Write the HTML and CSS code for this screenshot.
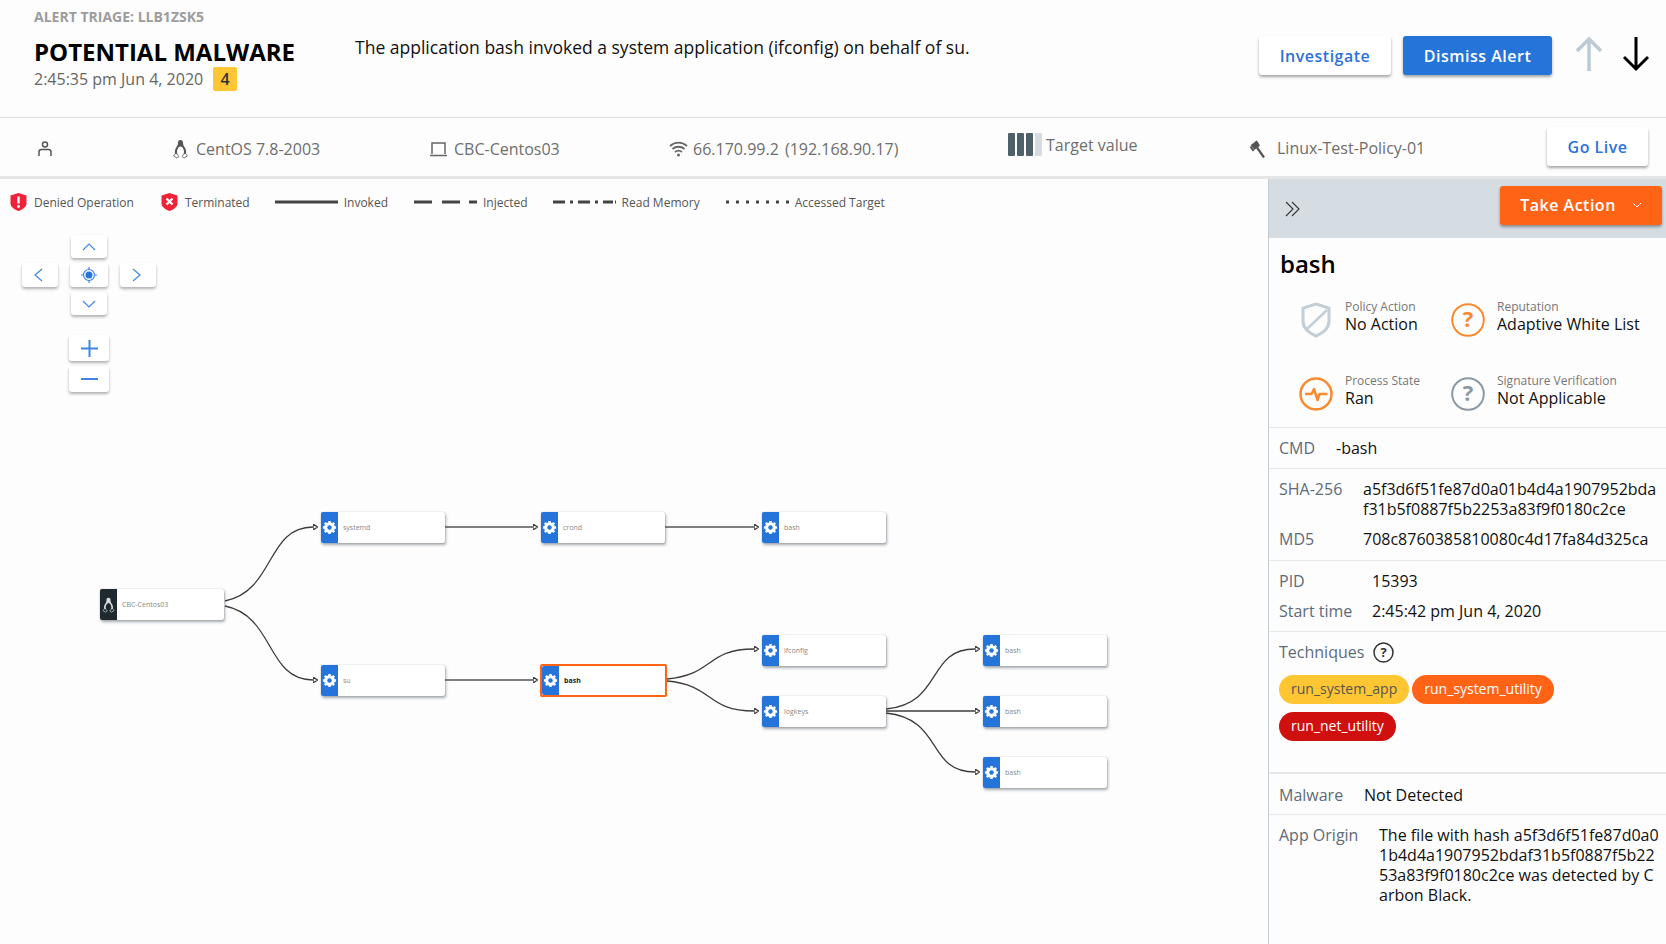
FILE: index.html
```html
<!DOCTYPE html>
<html lang="en">

<head>
    <meta charset="UTF-8">
    <meta name="viewport" content="width=device-width, initial-scale=1.0">
    <title>Alert Triage</title>
    <link rel="stylesheet" href="styles.css">
</head>

<body>
    <svg class="defs" width="0" height="0">
        <symbol id="gear" viewBox="0 0 16 16">
            <circle cx="8" cy="8" r="4.200" fill="none" stroke="#fff" stroke-width="3"/>
            <g stroke="#fff" stroke-width="2.600">
                <path d="M8 1v14M1 8h14M3 3l10 10M13 3L3 13"/>
            </g>
            <circle cx="8" cy="8" r="2.400" fill="#2474d9"/>
        </symbol>
        <symbol id="tux" viewBox="0 0 16 20">
            <path d="M8 1C6 1 5.300 2.600 5.400 4.600c.1 1.600-.8 2.600-1.700 4C2.700 10.200 2 12.500 2.500 15h11c.5-2.500-.2-4.800-1.200-6.400-.9-1.400-1.800-2.400-1.700-4C10.700 2.600 10 1 8 1z" fill="currentColor"/>
            <path d="M8 7.500c-2 0-3.500 3-3.500 5.500 0 2 1.500 3.500 3.500 3.500s3.500-1.500 3.500-3.500c0-2.500-1.500-5.500-3.500-5.500z" class="tux-belly"/>
            <path d="M3.500 14L1 17l3.500 2 2-1.500zM12.500 14L15 17l-3.500 2-2-1.500z" class="tux-feet"/>
        </symbol>
    </svg>

    <header class="top">
        <div class="title-block">
            <div class="crumb">ALERT TRIAGE: LLB1ZSK5</div>
            <h1>POTENTIAL MALWARE</h1>
            <div class="stamp">2:45:35 pm Jun 4, 2020 <span class="score">4</span></div>
        </div>
        <p class="summary">The application bash invoked a system application (ifconfig) on behalf of su.</p>
        <div class="top-actions">
            <button class="btn">Investigate</button>
            <button class="btn btn-blue">Dismiss Alert</button>
            <svg class="arrow" width="30" height="36" viewBox="0 0 30 36" fill="none" stroke="#bccad4" stroke-width="3.500">
                <path d="M15 35V3M3 15L15 3l12 12"/>
            </svg>
            <svg class="arrow" width="30" height="36" viewBox="0 0 30 36" fill="none" stroke="#000" stroke-width="3">
                <path d="M15 1v32M3 21l12 12 12-12"/>
            </svg>
        </div>
    </header>

    <section class="meta">
        <div class="meta-item">
            <svg width="18" height="18" viewBox="0 0 18 18" fill="none" stroke="#555" stroke-width="1.500">
                <circle cx="9" cy="4.500" r="2.500"/>
                <path d="M3 16v-4c0-1.500 1-2.500 2.500-2.500h7c1.500 0 2.500 1 2.500 2.500v4"/>
            </svg>
        </div>
        <div class="meta-item">
            <svg class="tux-icon" width="17" height="20"><use href="#tux"/></svg>
            CentOS 7.8-2003
        </div>
        <div class="meta-item">
            <svg width="19" height="18" viewBox="0 0 19 18" fill="none" stroke="#666" stroke-width="1.500">
                <path d="M3 14V3h13v11M1 15.500h17"/>
            </svg>
            CBC-Centos03
        </div>
        <div class="meta-item">
            <svg width="19" height="18" viewBox="0 0 19 18" fill="none" stroke="#666" stroke-width="1.800">
                <path d="M1 6c5-4.500 12-4.500 17 0M3.500 9c3.500-3 8.500-3 12 0M6 12c2-1.500 5-1.500 7 0"/>
                <circle cx="9.500" cy="15" r="1.500" fill="#666" stroke="none"/>
            </svg>
            <span class="ip">66.170.99.2 (192.168.90.17)</span>
        </div>
        <div class="meta-item target">
            <span class="bars"><i></i><i></i><i></i><i class="off"></i></span>
            Target value
        </div>
        <div class="meta-item">
            <svg width="17" height="20" viewBox="0 0 17 20" fill="none" stroke="#555">
                <path d="M3.500 8.500L9 4.500" stroke-width="6"/>
                <path d="M1.500 7.500L4.500 12M7 2l3 4.500" stroke-width="2"/>
                <path d="M8 8.500l7 10" stroke-width="2.200"/>
            </svg>
            <span class="policy-name">Linux-Test-Policy-01</span>
        </div>
        <button class="btn btn-live">Go Live</button>
    </section>

    <main class="main">
        <div class="canvas">
            <div class="legend">
                <span class="legend-item">
                    <svg width="17" height="20" viewBox="0 0 17 20"><path d="M8.500 1l8 2.500v8c0 3.500-4 6-8 7.500-4-1.500-8-4-8-7.500v-8z" fill="#ee2339"/><path d="M8.500 4.500v7" stroke="#fff" stroke-width="2.400"/><circle cx="8.500" cy="14.500" r="1.400" fill="#fff"/></svg>
                    Denied Operation
                </span>
                <span class="legend-item">
                    <svg width="17" height="20" viewBox="0 0 17 20"><path d="M8.500 1l8 2.500v8c0 3.500-4 6-8 7.500-4-1.500-8-4-8-7.500v-8z" fill="#ee2339"/><path d="M5.500 6.500l6 6M11.500 6.500l-6 6" stroke="#fff" stroke-width="2.200"/></svg>
                    Terminated
                </span>
                <span class="legend-item">
                    <svg class="line-key" width="63" height="4"><path d="M0 2h63"/></svg>
                    Invoked
                </span>
                <span class="legend-item">
                    <svg class="line-key" width="63" height="4"><path d="M0 2h18M28 2h18M55 2h8"/></svg>
                    Injected
                </span>
                <span class="legend-item">
                    <svg class="line-key" width="63" height="4"><path d="M0 2h12M17 2h3M25 2h12M42 2h3M50 2h10M62 2h1"/></svg>
                    Read Memory
                </span>
                <span class="legend-item">
                    <svg class="line-key" width="63" height="4"><path d="M0 2h3M10 2h3M20 2h3M30 2h3M40 2h3M50 2h3M60 2h3"/></svg>
                    Accessed Target
                </span>
            </div>

            <div class="controls">
                <button class="ctl ctl-up"><svg width="14" height="8" viewBox="0 0 14 8"><path d="M1 7l6-6 6 6"/></svg></button>
                <button class="ctl ctl-left"><svg width="9" height="14" viewBox="0 0 9 14"><path d="M8 1L1 7l7 6"/></svg></button>
                <button class="ctl ctl-center">
                    <svg width="16" height="16" viewBox="0 0 16 16"><circle cx="8" cy="8" r="5.500"/><circle cx="8" cy="8" r="3.500" class="dot"/><path d="M8 0v3M8 13v3M0 8h3M13 8h3"/></svg>
                </button>
                <button class="ctl ctl-right"><svg width="9" height="14" viewBox="0 0 9 14"><path d="M1 1l7 6-7 6"/></svg></button>
                <button class="ctl ctl-down"><svg width="14" height="8" viewBox="0 0 14 8"><path d="M1 1l6 6 6-6"/></svg></button>
                <button class="ctl ctl-zoom ctl-plus"><svg width="17" height="17" viewBox="0 0 17 17"><path d="M0 8.500h17M8.500 0v17"/></svg></button>
                <button class="ctl ctl-zoom ctl-minus"><svg width="17" height="2" viewBox="0 0 17 2"><path d="M0 1h17"/></svg></button>
            </div>

            <svg class="edges" width="1268" height="765" viewBox="0 180 1268 765">
                <defs>
                    <marker id="head" markerWidth="5" markerHeight="6" refX="0" refY="3" orient="auto" markerUnits="userSpaceOnUse">
                        <path d="M0 0l4.500 3L0 6z" fill="#444"/>
                    </marker>
                </defs>
                <path marker-end="url(#head)" d="M225 602C275 592 266 528 313 528"/>
                <path marker-end="url(#head)" d="M225 607C275 617 266 681 313 681"/>
                <path class="straight" marker-end="url(#head)" d="M445 528H533"/>
                <path class="straight" marker-end="url(#head)" d="M665 528H754"/>
                <path class="straight" marker-end="url(#head)" d="M445 681H533"/>
                <path marker-end="url(#head)" d="M667 680C714 676 706 650 754 650"/>
                <path marker-end="url(#head)" d="M667 682C714 686 706 712 754 712"/>
                <path marker-end="url(#head)" d="M886 710C944 704 926 650 975 650"/>
                <path marker-end="url(#head)" d="M886 712H975"/>
                <path marker-end="url(#head)" d="M886 714C944 720 926 773 975 773"/>
            </svg>

            <div class="node node-host n-host"><span class="node-icon"><svg class="tux-node" width="13" height="16"><use href="#tux"/></svg></span><span class="node-name">CBC-Centos03</span></div>
            <div class="node n-systemd"><span class="node-icon"><svg width="15" height="15"><use href="#gear"/></svg></span><span class="node-name">systemd</span></div>
            <div class="node n-crond"><span class="node-icon"><svg width="15" height="15"><use href="#gear"/></svg></span><span class="node-name">crond</span></div>
            <div class="node n-bash1"><span class="node-icon"><svg width="15" height="15"><use href="#gear"/></svg></span><span class="node-name">bash</span></div>
            <div class="node n-su"><span class="node-icon"><svg width="15" height="15"><use href="#gear"/></svg></span><span class="node-name">su</span></div>
            <div class="node node-selected n-bash2"><span class="node-icon"><svg width="15" height="15"><use href="#gear"/></svg></span><span class="node-name">bash</span></div>
            <div class="node n-ifconfig"><span class="node-icon"><svg width="15" height="15"><use href="#gear"/></svg></span><span class="node-name">ifconfig</span></div>
            <div class="node n-logkeys"><span class="node-icon"><svg width="15" height="15"><use href="#gear"/></svg></span><span class="node-name">logkeys</span></div>
            <div class="node n-bash3"><span class="node-icon"><svg width="15" height="15"><use href="#gear"/></svg></span><span class="node-name">bash</span></div>
            <div class="node n-bash4"><span class="node-icon"><svg width="15" height="15"><use href="#gear"/></svg></span><span class="node-name">bash</span></div>
            <div class="node n-bash5"><span class="node-icon"><svg width="15" height="15"><use href="#gear"/></svg></span><span class="node-name">bash</span></div>
        </div>

        <aside class="panel">
            <div class="panel-head">
                <svg width="16" height="16" viewBox="0 0 16 16" fill="none" stroke="#333" stroke-width="1.100">
                    <path d="M1 1l7 7-7 7M7 1l7 7-7 7"/>
                </svg>
                <button class="btn btn-action">Take Action
                    <svg width="10" height="6" viewBox="0 0 10 6" fill="none" stroke="#fff"><path d="M1 1l4 4 4-4"/></svg>
                </button>
            </div>
            <h2>bash</h2>
            <div class="status-grid">
                <div class="status">
                    <svg width="34" height="36" viewBox="0 0 34 36" fill="none" stroke="#c3ced6" stroke-width="3">
                        <path d="M17 2l13 4v13c0 7-6 12-13 15C10 31 4 26 4 19V6z"/>
                        <path d="M8 27L28 8" stroke-width="2.500"/>
                    </svg>
                    <div><div class="status-label">Policy Action</div><div class="status-value">No Action</div></div>
                </div>
                <div class="status">
                    <svg width="34" height="34" viewBox="0 0 34 34"><circle cx="17" cy="17" r="15.800" fill="none" stroke="#fb8a2e" stroke-width="2"/><text x="17" y="24" text-anchor="middle" class="qmark" fill="#fb8a2e">?</text></svg>
                    <div><div class="status-label">Reputation</div><div class="status-value">Adaptive White List</div></div>
                </div>
                <div class="status">
                    <svg width="34" height="34" viewBox="0 0 34 34" fill="none" stroke="#fb8a2e"><circle cx="17" cy="17" r="15.500" stroke-width="2.500"/><path d="M6 17h6.500l2.500-5 3.500 11 2-6h8" stroke-width="2.500" stroke-linejoin="round"/></svg>
                    <div><div class="status-label">Process State</div><div class="status-value">Ran</div></div>
                </div>
                <div class="status">
                    <svg width="34" height="34" viewBox="0 0 34 34"><circle cx="17" cy="17" r="15.800" fill="none" stroke="#8b98a3" stroke-width="2"/><text x="17" y="24" text-anchor="middle" class="qmark" fill="#8b98a3">?</text></svg>
                    <div><div class="status-label">Signature Verification</div><div class="status-value">Not Applicable</div></div>
                </div>
            </div>

            <div class="group">
                <div class="row"><span class="key key-cmd">CMD</span><span class="val">-bash</span></div>
            </div>
            <div class="group group-hash">
                <div class="row"><span class="key key-hash">SHA-256</span><span class="val">a5f3d6f51fe87d0a01b4d4a1907952bdaf31b5f0887f5b2253a83f9f0180c2ce</span></div>
                <div class="row"><span class="key key-hash">MD5</span><span class="val">708c8760385810080c4d17fa84d325ca</span></div>
            </div>
            <div class="group">
                <div class="row"><span class="key key-pid">PID</span><span class="val">15393</span></div>
                <div class="row"><span class="key key-pid">Start time</span><span class="val">2:45:42 pm Jun 4, 2020</span></div>
            </div>
            <div class="group group-tech">
                <div class="row row-tech">
                    <span class="key">Techniques</span>
                    <svg width="21" height="21" viewBox="0 0 21 21"><circle cx="10.500" cy="10.500" r="9.500" fill="none" stroke="#333" stroke-width="1.500"/><text x="10.500" y="15" text-anchor="middle" class="qmark-sm" fill="#333">?</text></svg>
                </div>
                <div class="pills">
                    <span class="pill pill-yellow">run_system_app</span>
                    <span class="pill pill-orange">run_system_utility</span>
                    <span class="pill pill-red">run_net_utility</span>
                </div>
            </div>
            <div class="group group-malware">
                <div class="row"><span class="key key-origin">Malware</span><span class="val">Not Detected</span></div>
            </div>
            <div class="group group-last">
                <div class="row"><span class="key key-app">App Origin</span><span class="val">The file with hash a5f3d6f51fe87d0a01b4d4a1907952bdaf31b5f0887f5b2253a83f9f0180c2ce was detected by Carbon Black.</span></div>
            </div>
        </aside>
    </main>
</body>

</html>
```

FILE: styles.css
```css
/* Base */
* {
    box-sizing: border-box;
}

html,
body {
    height: 100%;
}

body {
    margin: 0;
    padding: 0;
    height: 944px;
    overflow: hidden;
    font-family: "Open Sans", Arial, sans-serif;
    background-color: #fdfdfd;
    color: #111;
}

.defs {
    position: absolute;
}

.tux-belly {
    fill: var(--belly, #fff);
}

.tux-feet {
    fill: var(--belly, #fff);
    stroke: currentColor;
    stroke-width: 0.800;
}

/* Buttons */
.btn {
    font-family: "Open Sans", Arial, sans-serif;
    font-size: 16px;
    font-weight: 600;
    letter-spacing: 0.5px;
    color: #2d72d9;
    background-color: #fff;
    border: none;
    border-radius: 3px;
    height: 39px;
    padding: 0;
    box-shadow: 0 2px 3px rgba(0, 0, 0, 0.35);
}

.btn-blue {
    width: 149px;
    background-color: #2474d9;
    color: #fff;
}

/* Top header */
.top {
    display: flex;
    height: 118px;
    padding-left: 34px;
    border-bottom: 1px solid #dedede;
}

.title-block {
    width: 321px;
    padding-top: 8px;
}

.crumb {
    font-size: 14px;
    font-weight: 700;
    line-height: 18px;
    color: #9c9c9c;
}

h1 {
    margin: 12px 0 0;
    font-size: 24px;
    font-weight: 700;
    line-height: 27px;
    color: #000;
}

.stamp {
    margin-top: 2px;
    font-size: 16px;
    line-height: 24px;
    color: #666;
    display: flex;
    align-items: center;
}

.score {
    display: inline-block;
    width: 24px;
    height: 24px;
    margin-left: 10px;
    border-radius: 2px;
    background-color: #ffc633;
    font-weight: 600;
    color: #333;
    text-align: center;
}

.summary {
    margin: 35px 0 0;
    font-size: 17.520px;
    line-height: 24px;
    color: #111;
}

.top-actions {
    display: flex;
    align-items: flex-start;
    margin-left: auto;
    padding-top: 36px;
    padding-right: 15px;
}

.top-actions .btn:first-child {
    width: 132px;
    margin-right: 12px;
}

.arrow {
    margin-left: 22px;
}

.arrow + .arrow {
    margin-left: 17px;
}

/* Host meta bar */
.meta {
    display: grid;
    grid-template-columns: 136px 257px 240px 339px 241px 298px 101px;
    align-items: center;
    height: 61px;
    padding-left: 36px;
    border-bottom: 3px solid #e6e6e6;
    font-size: 16px;
    color: #6e6e6e;
}

.meta-item {
    display: flex;
    align-items: center;
    gap: 6px;
    padding-top: 3px;
}

.meta-item:nth-child(2) {
    gap: 7px;
}

.ip {
    word-spacing: 2px;
    margin-left: -1px;
}

.tux-icon {
    color: #555;
}

.target {
    padding-top: 0;
    padding-bottom: 5px;
    gap: 4px;
}

.policy-name {
    margin-left: 5px;
    margin-top: -2px;
}

.bars {
    display: flex;
    gap: 2px;
    margin-right: 0;
    height: 23px;
}

.bars i {
    display: block;
    width: 7px;
    background-color: #4e616b;
    border-radius: 1px;
}

.bars i.off {
    background-color: #d5dce2;
}

.btn-live {
    width: 101px;
    margin-top: -1px;
}

/* Graph canvas */
.main {
    display: flex;
    height: 765px;
}

.canvas {
    position: relative;
    flex: 1;
}

.legend {
    display: flex;
    align-items: center;
    height: 24px;
    margin-top: 11px;
    padding-left: 10px;
    font-size: 12px;
    color: #555;
}

.legend-item {
    display: flex;
    align-items: center;
    gap: 6px;
    margin-right: 26px;
}

.legend-item:nth-child(1) svg,
.legend-item:nth-child(2) svg {
    margin-right: 1px;
}

.legend-item:nth-child(1) {
    margin-right: 27px;
}

.legend-item:nth-child(2) {
    margin-right: 25px;
}

.legend-item:nth-child(4) {
    margin-right: 25px;
}

.line-key path {
    fill: none;
    stroke: #444;
    stroke-width: 3;
}

.controls {
    position: absolute;
    left: 22px;
    top: 56px;
    display: grid;
    grid-template-columns: 36px 38px 36px;
    grid-template-rows: 23px 24px 23px 41px 26px;
    column-gap: 12px;
    row-gap: 5px;
}

.ctl {
    display: flex;
    align-items: center;
    justify-content: center;
    padding: 0;
    border: none;
    border-radius: 3px;
    background-color: #fff;
    box-shadow: 0 2px 3px rgba(0, 0, 0, 0.3);
}

.ctl svg {
    fill: none;
    stroke: #3f86e4;
    stroke-width: 1.200;
}

.ctl-up {
    grid-column: 2;
    grid-row: 1;
    width: 36px;
    justify-self: center;
}

.ctl-left {
    grid-column: 1;
    grid-row: 2;
    padding-right: 4px;
}

.ctl-center {
    grid-column: 2;
    grid-row: 2;
}

.ctl-center .dot {
    fill: #2474d9;
    stroke: none;
}

.ctl-right {
    grid-column: 3;
    grid-row: 2;
    padding-right: 4px;
}

.ctl-down {
    grid-column: 2;
    grid-row: 3;
    width: 36px;
    justify-self: center;
}

.ctl-zoom {
    width: 40px;
    justify-self: center;
    grid-column: 2;
}

.ctl-zoom svg {
    stroke-width: 2;
}

.ctl-plus {
    grid-row: 4;
    margin-top: 15px;
}

.ctl-minus {
    grid-row: 5;
}

.edges {
    position: absolute;
    left: 0;
    top: 0;
}

.edges path {
    fill: none;
    stroke: #3d3d3d;
    stroke-width: 1.300;
}

.edges path.straight {
    stroke: #555;
    stroke-width: 1.500;
}

/* Nodes, placed on the free canvas */
.node {
    position: absolute;
    display: flex;
    align-items: center;
    width: 124px;
    height: 31px;
    border-radius: 2px;
    background-color: #fff;
    box-shadow: 1px 2px 3px rgba(60, 70, 80, 0.45), 0 0 1px rgba(60, 70, 80, 0.5);
    font-size: 7px;
    color: #888;
}

.node-icon {
    display: flex;
    align-items: center;
    justify-content: center;
    width: 17px;
    height: 100%;
    border-radius: 2px 0 0 2px;
    background-color: #2474d9;
}

.node-name {
    margin-left: 5px;
}

.node-host .node-icon {
    background-color: #1f2a30;
}

.node-host .tux-node {
    color: #d8dcdf;
    --belly: #1f2a30;
}

.node-selected {
    box-shadow: none;
    border: 2px solid #ff6316;
    color: #222;
    font-weight: 700;
}

.n-host { left: 100px; top: 410px; }
.n-systemd { left: 321px; top: 333px; }
.n-crond { left: 541px; top: 333px; }
.n-bash1 { left: 762px; top: 333px; }
.n-su { left: 321px; top: 486px; }
.n-bash2 { left: 540px; top: 485px; width: 127px; height: 33px; }
.n-ifconfig { left: 762px; top: 456px; }
.n-logkeys { left: 762px; top: 517px; }
.n-bash3 { left: 983px; top: 456px; }
.n-bash4 { left: 983px; top: 517px; }
.n-bash5 { left: 983px; top: 578px; }

/* Side panel */
.panel {
    width: 398px;
    flex-shrink: 0;
    border-left: 1px solid #c3ccd4;
    font-size: 16px;
    line-height: 20px;
}

.panel-head {
    display: flex;
    align-items: center;
    justify-content: space-between;
    height: 59px;
    padding: 0 4px 0 16px;
    background-color: #d5dce2;
}

.btn-action {
    display: flex;
    align-items: center;
    justify-content: center;
    gap: 16px;
    width: 162px;
    margin-top: -7px;
    background-color: #ff6316;
    color: #fff;
}

h2 {
    margin: 0;
    padding: 11px 0 0 11px;
    font-size: 24px;
    font-weight: 600;
    line-height: 30px;
    color: #000;
}

.status-grid {
    display: grid;
    grid-template-columns: 152px 1fr;
    grid-auto-rows: 35px;
    row-gap: 39px;
    padding: 19.500px 0 19px 30px;
    border-bottom: 1px solid #e8e8e8;
}

.status {
    display: flex;
    align-items: center;
    gap: 12px;
}

.status svg {
    margin: 3.500px 0 -3.500px;
}

.status-label {
    font-size: 12px;
    line-height: 15px;
    color: #777;
}

.status-value {
    font-size: 16px;
    line-height: 20px;
    color: #111;
}

.qmark {
    font-size: 22px;
    font-weight: 700;
    font-family: "Open Sans", Arial, sans-serif;
}

.qmark-sm {
    font-size: 13px;
    font-weight: 700;
    font-family: "Open Sans", Arial, sans-serif;
}

.group {
    display: flex;
    flex-direction: column;
    gap: 10px;
    padding: 10px 6px 10px 10px;
    border-bottom: 1px solid #e8e8e8;
}

.group-hash {
    padding-bottom: 11px;
}

.group-malware {
    padding: 11px 6px 9px 10px;
}

.group-last {
    border-bottom: none;
    line-height: 20.300px;
}

.group-tech {
    display: block;
    height: 142px;
    border-bottom: 2px solid #e4e8ea;
}

.row {
    display: flex;
}

.key {
    flex-shrink: 0;
    color: #5e6b78;
}

.val {
    word-break: break-all;
    color: #111;
}

.key-cmd { width: 57px; }
.key-hash { width: 84px; }
.key-pid { width: 93px; }
.key-origin { width: 85px; }
.key-app { width: 100px; }

.row-tech {
    align-items: center;
    gap: 9px;
}

.pills {
    display: flex;
    flex-wrap: wrap;
    gap: 8px 3px;
    margin-top: 12px;
}

.pill {
    height: 29px;
    padding: 0 12px;
    border-radius: 15px;
    font-size: 14px;
    line-height: 28px;
}

.pill-yellow {
    background-color: #ffc633;
    color: #555;
}

.pill-orange {
    background-color: #ff6316;
    color: #fff;
}

.pill-red {
    background-color: #d0100f;
    color: #fff;
}
```
